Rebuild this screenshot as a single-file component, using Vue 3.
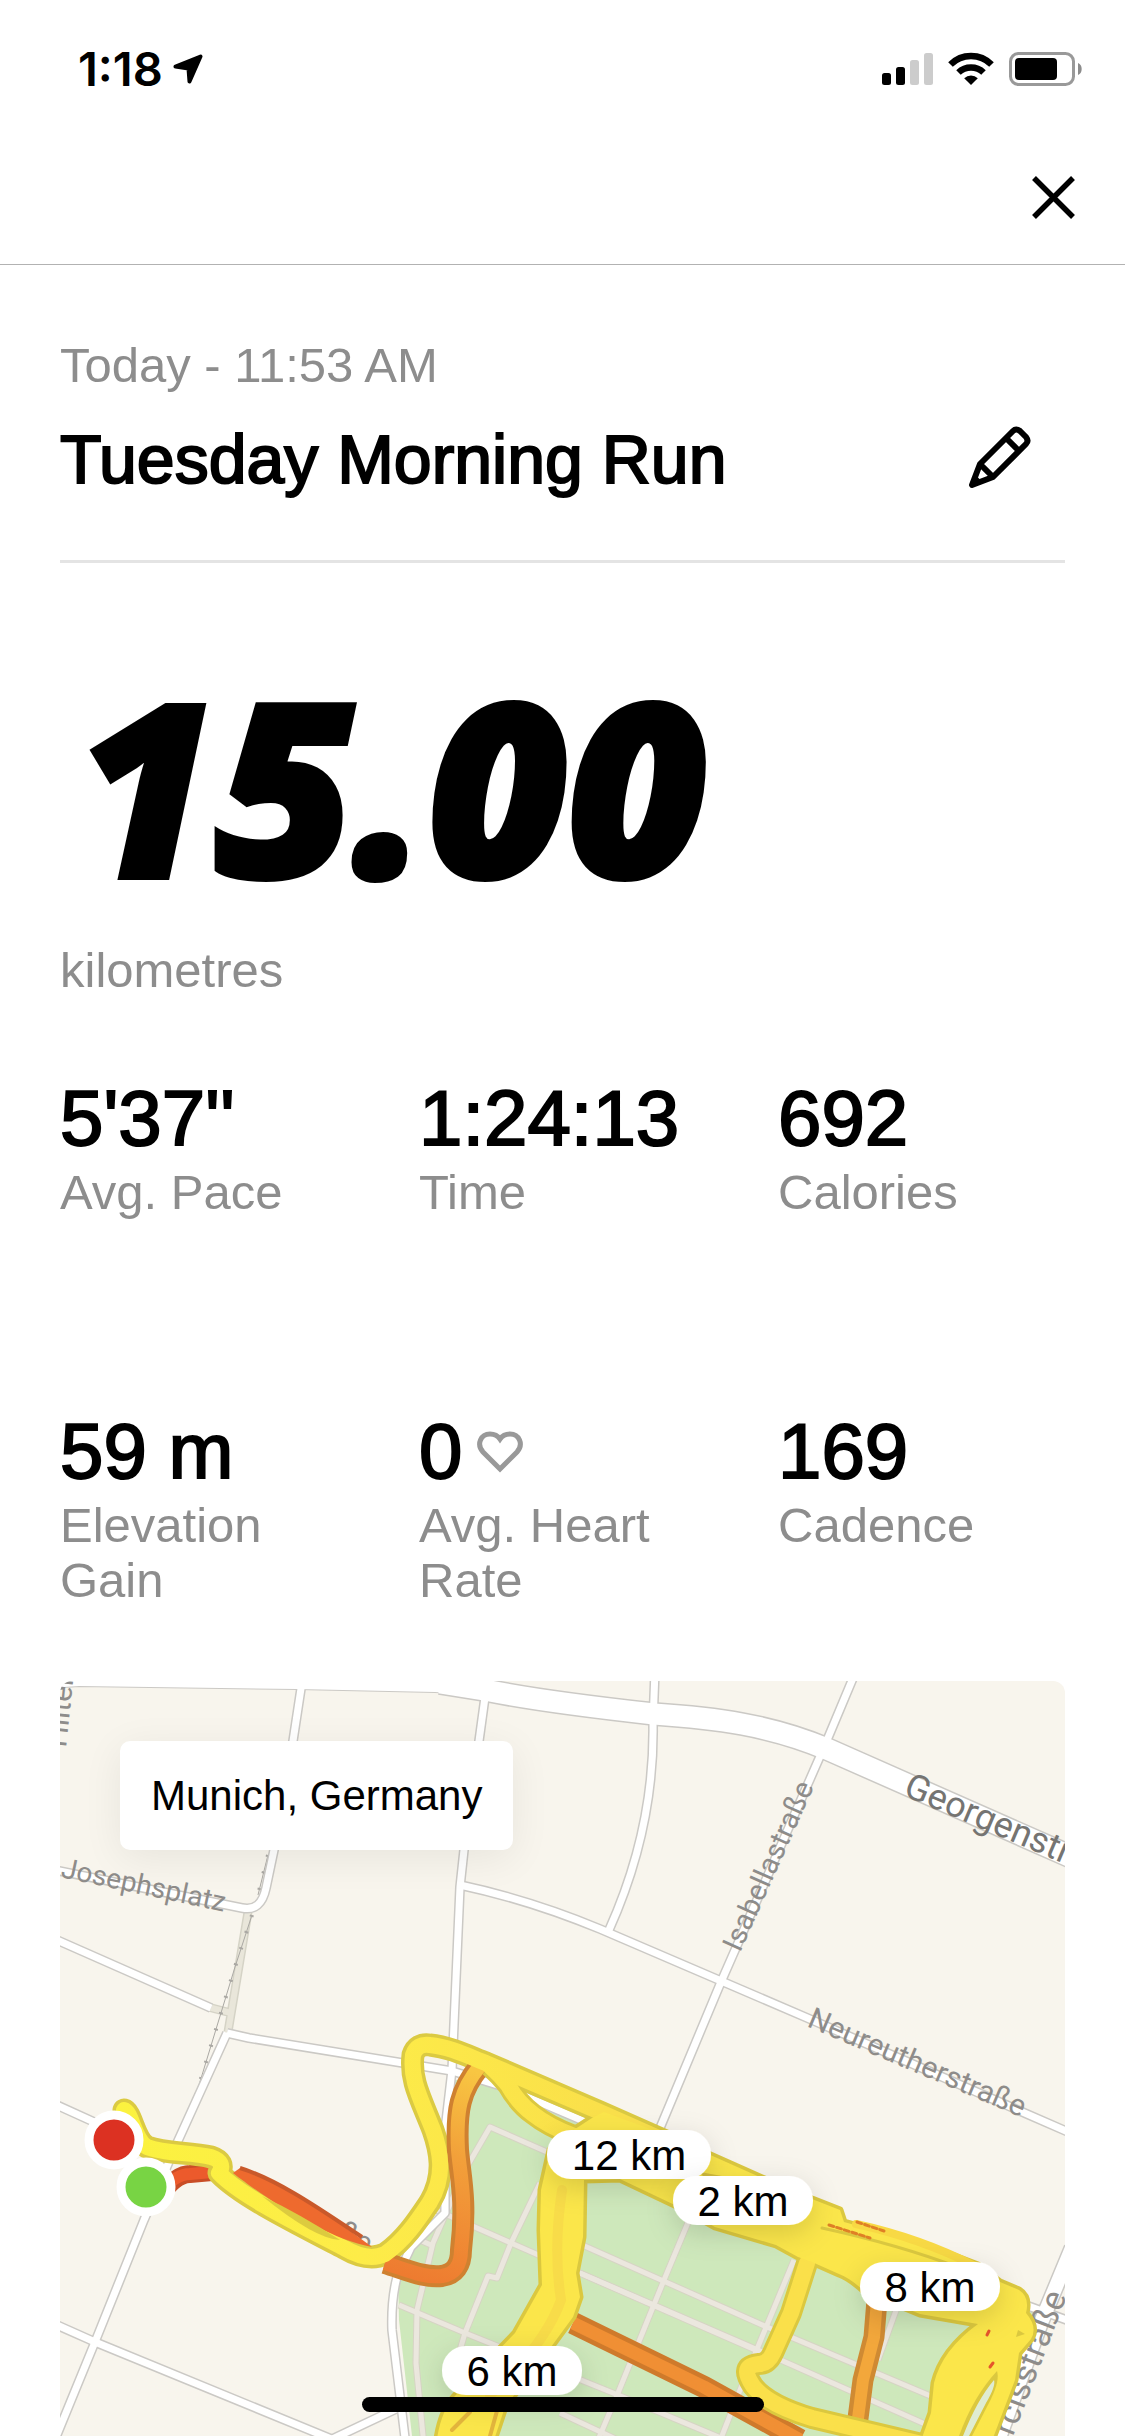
<script setup>
const stats = [
  { value: "5'37''", label: 'Avg. Pace' },
  { value: '1:24:13', label: 'Time' },
  { value: '692', label: 'Calories' },
  { value: '59 m', label: 'Elevation Gain' },
  { value: '0', label: 'Avg. Heart Rate', heart: true },
  { value: '169', label: 'Cadence' },
]

const boulevard = 'M440 1683 L490 1691 C530 1699 600 1708 654 1714 C715 1718 770 1725 827 1749 L1085 1863'
const boulevardWest = 'M50 1688 L79 1686 L297 1689 L435 1692 Q462 1693 484 1700 L500 1694 L480 1670 L50 1670 Z'

const roads = [
  'M302 1682 L293 1741 L274 1850 L266 1888 Q261 1912 242 1908 L50 1869',
  'M486 1690 L479 1741 L464 1850 L460 1887 L452 2070 L445 2130 L445 2213 L411 2247 L397 2277 Q391 2300 392 2330 L406 2446',
  'M460 1885 Q530 1900 600 1929 L812 2020 L1075 2135',
  'M655 1671 L653 1723 C654 1780 645 1850 609 1930',
  'M856 1671 L825 1745 L721 1982 L655 2140',
  'M50 1937 L211 2008',
  'M227 2033 L249 2038 L452 2071 L504 2087 L600 2128',
  'M227 2033 L177 2143 L144 2220 L95 2342 L54 2442',
  'M50 2322 L95 2342 L346 2445',
  'M50 2102 L94 2122',
  'M326 2442 L398 2408',
  'M1020 2303 L1075 2323',
]

const parkPaths = [
  'M547 2152 L490 2127 L465 2170 L433 2243 L417 2310 L416 2363 L424 2446',
  'M415 2238 L431 2245',
  'M436 2210 L511 2243 L767 2355',
  'M540 2183 L511 2243 L497 2278 L488 2276 L465 2333 L460 2350',
  'M399 2305 L465 2333 L618 2395 L740 2446',
  'M580 2244 L767 2327 L940 2400',
  'M580 2273 L758 2350 L925 2424',
  'M692 2213 L664 2280 L618 2393 L598 2440',
  'M794 2260 L740 2390 L718 2446',
  'M898 2305 L878 2360',
  'M560 2413 L620 2441',
]

const yellowRoutes = [
  'M124 2110 C132 2112 134 2140 147 2147 C165 2154 190 2152 211 2157 Q226 2162 219 2173 C240 2195 290 2220 344 2248 Q368 2262 385 2254 C405 2240 418 2220 430 2202 C446 2175 440 2150 433 2130 C420 2097 410 2080 413 2055 Q417 2043 430 2045 C450 2047 468 2056 486 2063 L600 2112 L670 2143',
  'M490 2066 Q500 2075 508 2085 Q518 2103 533 2114 Q548 2126 574 2136',
  'M807 2263 L791 2313 L773 2353 Q768 2364 759 2364 C742 2366 746 2375 753 2386 Q768 2405 812 2418 L930 2446',
]

const mainBand =
  'M604 2112 L661 2133 L762 2178 L812 2199 L840 2210 L844 2222 L884 2233 L928 2246 L978 2265 L1000 2282 L1019 2290 Q1030 2297 1026 2313 Q1038 2327 1031 2339 L1019 2353 L1015 2380 L990 2446 L919 2446 L931 2413 L934 2383 Q942 2350 978 2324 L920 2314 L864 2291 Q850 2278 839 2274 L812 2262 L798 2257 L776 2245 L715 2227 L679 2207 L620 2179 L584 2180 L583 2237 L576 2273 L580 2297 L573 2317 L551 2347 L505 2407 L492 2446 L436 2446 Q440 2412 454 2397 L486 2363 L515 2333 L542 2285 L540 2230 L541 2190 L550 2150 L566 2135 L592 2118 Z'

const kmPins = [
  { label: '12 km', x: 629, y: 2154, w: 164 },
  { label: '2 km', x: 743, y: 2200, w: 140 },
  { label: '8 km', x: 930, y: 2286, w: 140 },
  { label: '6 km', x: 512, y: 2370, w: 140 },
]
</script>

<template>
  <div class="screen">
    <div class="status">
      <div class="clock">
        <span>1:18</span>
        <svg width="30" height="30" viewBox="0 0 30 30" aria-hidden="true">
          <path d="M2.500 12.500 L27.500 2.500 L16.500 27.500 L15.500 14.500 Z" stroke="#000" stroke-width="4" stroke-linejoin="round" />
        </svg>
      </div>
      <svg class="indicators" width="201" height="36" viewBox="882 51 201 36" aria-hidden="true">
        <rect x="882" y="73" width="9" height="12" rx="2.500" />
        <rect x="896" y="67" width="9" height="18" rx="2.500" />
        <rect x="910" y="60" width="9" height="25" rx="2.500" fill="#ccc" />
        <rect x="924" y="53" width="9" height="32" rx="2.500" fill="#ccc" />
        <g fill="none" stroke="#000" stroke-width="6.500">
          <path d="M950.500 64.500 A29 29 0 0 1 991.500 64.500" />
          <path d="M958.500 72.500 A18 18 0 0 1 983.500 72.500" />
        </g>
        <path d="M971 85 L964.200 78.200 A10 10 0 0 1 977.800 78.200 Z" />
        <rect x="1010.500" y="53.500" width="63" height="31" rx="8" fill="none" stroke="#999" stroke-width="3" />
        <rect x="1015" y="58" width="42" height="22" rx="4" />
        <path d="M1078 63 a6 6.500 0 0 1 0 12 z" fill="#8c8c8c" />
      </svg>
    </div>

    <header class="topbar">
      <button type="button" class="icon-button" aria-label="Close">
        <svg width="43" height="43" viewBox="0 0 43 43" fill="none" stroke="#000" stroke-width="5.500">
          <path d="M2 2 L41 41 M41 2 L2 41" />
        </svg>
      </button>
    </header>

    <main>
      <section class="heading">
        <div>
          <p class="muted">Today - 11:53 AM</p>
          <h1>Tuesday Morning Run</h1>
        </div>
        <button type="button" class="icon-button" aria-label="Edit title">
          <svg width="66" height="70" viewBox="0 0 66 70" fill="none" stroke="#000" stroke-width="6" stroke-linejoin="round">
            <path d="M5 61 L13 40 L46 7 Q49 4 53 7 L59 13 Q62 17 59 20 L26 53 Z M13 40 L26 53 M39 14 L52 27" />
            <path d="M5 61 L8 52 L14 58 Z" fill="#000" stroke-width="2" />
          </svg>
        </button>
      </section>

      <section class="distance">
        <div class="big">15.00</div>
        <p class="muted">kilometres</p>
      </section>

      <dl class="stats">
        <div v-for="s in stats" :key="s.label" class="stat">
          <dd>
            {{ s.value }}
            <svg v-if="s.heart" width="46" height="42" viewBox="0 0 46 42" fill="none" stroke="#999" stroke-width="5" aria-hidden="true">
              <path d="M23 36 L6 19 C-1 11 4 1 13 1 C18 1 21 3 23 6 C25 3 28 1 33 1 C42 1 47 11 40 19 Z" transform="translate(0 2)" />
            </svg>
          </dd>
          <dt class="muted">{{ s.label }}</dt>
        </div>
      </dl>

      <section class="map">
        <svg class="map-canvas" viewBox="60 1681 1005 755" role="img" aria-label="Route map">
          <defs>
            <linearGradient id="warm" gradientUnits="userSpaceOnUse" x1="400" y1="2275" x2="470" y2="2070">
              <stop offset="0" stop-color="#ee7b30" />
              <stop offset="0.6" stop-color="#f2a03a" />
              <stop offset="1" stop-color="#f8c642" />
            </linearGradient>
            <linearGradient id="sun" gradientUnits="userSpaceOnUse" x1="120" y1="0" x2="600" y2="0">
              <stop offset="0" stop-color="#fbf23f" />
              <stop offset="0.5" stop-color="#fdec48" />
              <stop offset="1" stop-color="#fae04a" />
            </linearGradient>
            <filter id="pinShadow" x="-30%" y="-60%" width="160%" height="260%">
              <feDropShadow dx="0" dy="8" stdDeviation="14" flood-color="#000" flood-opacity="0.14" />
            </filter>
          </defs>

          <rect x="60" y="1681" width="1005" height="755" fill="#f8f5ed" />
          <path fill="#cee8bb" d="M454 2080 L490 2081 L600 2130 L830 2230 L1045 2310 L1000 2436 L412 2436 L399 2320 L398 2277 L411 2247 L445 2213 L454 2163 Z" />
          <g fill="none" stroke-linejoin="round">
            <path v-for="d in parkPaths" :key="d" :d="d" stroke="#d6d4c4" stroke-width="7" />
            <path v-for="d in parkPaths" :key="'i' + d" :d="d" stroke="#ebe7de" stroke-width="5" />
            <path d="M248 1912 L228 2032 M208 2007 L231 2013" stroke="#d5d3c6" stroke-width="9" />
            <path d="M248 1912 L228 2032 M208 2007 L231 2013" stroke="#e9e6da" stroke-width="6" />
            <path d="M268 1855 L258 1895 M252 1915 L235 1967 L192 2108" stroke="#aaa8a3" stroke-width="1" />
            <path d="M268 1855 L258 1895 M252 1915 L235 1967 L192 2108" stroke="#aaa8a3" stroke-width="4" stroke-dasharray="2 15" />
            <path v-for="d in roads" :key="d" :d="d" stroke="#cbc9c5" stroke-width="10" />
            <path d="M1072 2248 L1040 2325 L996 2446" stroke="#cbc9c5" stroke-width="17" />
            <path :d="boulevardWest" stroke="#cbc9c5" stroke-width="2" />
            <path :d="boulevard" stroke="#cbc9c5" stroke-width="24" />
            <path v-for="d in roads" :key="'w' + d" :d="d" stroke="#fff" stroke-width="7" />
            <path d="M1072 2248 L1040 2325 L996 2446" stroke="#fff" stroke-width="14" />
            <path :d="boulevard" stroke="#fff" stroke-width="21" />
          </g>
          <path :d="boulevardWest" fill="#fff" />

          <g class="street">
            <text transform="translate(66 1748) rotate(-84)" font-size="30">Hilten</text>
            <text transform="translate(60 1877) rotate(12)" font-size="28">Josephsplatz</text>
            <text transform="translate(740 1953) rotate(-66)" font-size="29">Isabellastraße</text>
            <text transform="translate(806 2026) rotate(23)" font-size="30">Neureutherstraße</text>
            <text transform="translate(336 2239) rotate(27)" font-size="30">ße</text>
            <text transform="translate(1067 2296) rotate(-69)" font-size="34" text-anchor="end">Arcisstraße</text>
            <text class="major" transform="translate(902 1795) rotate(23)" font-size="36">Georgenstraße</text>
          </g>

          <g fill="none" stroke-linejoin="round">
            <path d="M160 2196 Q176 2174 190 2174 L212 2172" stroke="#c94d26" stroke-width="18" />
            <path d="M160 2192 Q176 2174 190 2174 L212 2172" stroke="#ec5a2c" stroke-width="12" />
            <path :d="yellowRoutes[0]" stroke="#dbca42" stroke-width="23" stroke-linecap="round" />
            <path d="M385 2263 C410 2271 425 2278 442 2276 Q461 2273 461 2250 C467 2200 460 2175 458 2150 C456 2110 460 2090 480 2066" stroke="#cf8130" stroke-width="22" />
            <path d="M385 2263 C410 2271 425 2278 442 2276 Q461 2273 461 2250 C467 2200 460 2175 458 2150 C456 2110 460 2090 480 2066" stroke="url(#warm)" stroke-width="14" />
            <path d="M573 2323 L704 2387 L800 2440" stroke="#cf7a2b" stroke-width="22" />
            <path d="M573 2323 L704 2387 L800 2440" stroke="#f08f34" stroke-width="13" />
            <path d="M877 2300 L874 2337 L863 2380 L857 2426" stroke="#cf8a33" stroke-width="21" />
            <path d="M877 2300 L874 2337 L863 2380 L857 2426" stroke="#f3a73b" stroke-width="12" />
            <path v-for="d in yellowRoutes.slice(1)" :key="d" :d="d" stroke="#dbc83f" stroke-width="22" />
            <path :d="mainBand" fill="#dbc83f" stroke="#dbc83f" stroke-width="7" />
            <path v-for="d in yellowRoutes" :key="'y' + d" :d="d" stroke="url(#sun)" stroke-width="16" stroke-linecap="round" />
          </g>
          <path :d="mainBand" fill="#fbe64a" />
          <path d="M233 2173 L240 2168 C280 2180 330 2216 372 2247 C330 2240 270 2202 233 2173 Z" fill="#ee6a2e" />
          <path d="M240 2168 C280 2180 330 2216 362 2237" fill="none" stroke="#c9592a" stroke-width="4" />
          <path d="M262 2196 Q300 2214 340 2240 Q315 2239 262 2196 Z" fill="#dccb3f" />
          <path d="M700 2172 L722 2176 L740 2186 L708 2183 Z" fill="#d8c23f" />
          <g fill="none" stroke-linecap="round">
            <path d="M822 2228 Q900 2245 960 2268" stroke="#dbc83f" stroke-width="3" />
            <path d="M856 2224 Q920 2238 975 2266" stroke="#f8d944" stroke-width="8" />
            <path d="M829 2225 L870 2238" stroke="#df8025" stroke-width="3" stroke-dasharray="5 3" />
            <path d="M857 2222 L884 2231" stroke="#df8025" stroke-width="3" stroke-dasharray="5 3" />
            <path d="M562 2190 Q553 2250 561 2300 Q545 2345 490 2395" stroke="#f8dc49" stroke-width="10" />
            <path d="M452 2430 L470 2412 M500 2400 L490 2436" stroke="#e3b53c" stroke-width="4" />
            <path d="M987 2335 l2 -4 M990 2367 l3 -4" stroke="#e5552b" stroke-width="3" />
          </g>
          <path d="M997 2371 Q1000 2380 991 2399 L972 2436 L959 2436 Q973 2397 997 2371 Z" fill="#dbc83f" />
          <path d="M994 2380 Q996 2386 986 2403 L969 2436 L963 2436 Q977 2400 994 2380 Z" fill="#dfecd2" />
          <path d="M1018 2330 l7 4 l-9 3 z" fill="#dbc83f" />

          <g stroke="#fff" stroke-width="9">
            <circle cx="114" cy="2140" r="25" fill="#dc3122" />
            <circle cx="146" cy="2187" r="25" fill="#78d444" />
          </g>

          <g v-for="p in kmPins" :key="p.label">
            <rect :x="p.x - p.w / 2" :y="p.y - 24" :width="p.w" height="49" rx="24" fill="#fff" filter="url(#pinShadow)" />
            <text :x="p.x" :y="p.y + 16" text-anchor="middle" font-size="42">{{ p.label }}</text>
          </g>
        </svg>
        <div class="place">Munich, Germany</div>
      </section>
    </main>
    <div class="home-indicator"></div>
  </div>
</template>

<style>
body {
  background: #fff;
}
</style>

<style scoped>
.screen {
  position: relative;
  height: 100vh;
  overflow: hidden;
  color: #000;
  font-family: "Liberation Sans", Arial, sans-serif;
}
p,
h1,
dl,
dd,
dt {
  margin: 0;
}
.status {
  display: flex;
  justify-content: space-between;
  padding: 40px 42px 0 78px;
  height: 60px;
}
.clock {
  display: flex;
  align-items: center;
  gap: 10px;
  height: 58px;
  font: 600 47px/58px Inter, sans-serif;
}
.indicators {
  margin-top: 11px;
}
.topbar {
  display: flex;
  justify-content: flex-end;
  align-items: center;
  height: 165px;
  padding: 30px 50px 0 60px;
  border-bottom: 1px solid #b2b2b2;
  box-sizing: border-box;
}
.icon-button {
  display: flex;
  padding: 0;
  border: 0;
  background: none;
}
main {
  padding: 0 60px;
}
.muted {
  color: #8d8d8d;
  font-size: 49px;
  line-height: 55px;
}
.heading {
  display: flex;
  justify-content: space-between;
  align-items: flex-end;
  padding: 73px 32px 66px 0;
  border-bottom: 3px solid #e4e4e4;
}
h1 {
  margin-top: 31px;
  font-size: 68px;
  font-weight: 400;
  line-height: 70px;
  -webkit-text-stroke: 2px #000;
}
.distance {
  padding-top: 76px;
}
.big {
  margin-bottom: 14px;
  padding-left: 16px;
  font: italic 800 240px/290px "Open Sans", sans-serif;
  -webkit-text-stroke: 6px #000;
}
.stats {
  display: grid;
  grid-template-columns: repeat(3, 1fr);
  column-gap: 72px;
  padding: 74px 0 73px;
}
.stat {
  min-height: 333px;
}
.stat:nth-child(n + 4) {
  min-height: 0;
}
.stat dd {
  display: flex;
  align-items: center;
  gap: 15px;
  font-size: 78px;
  font-kerning: none;
  line-height: 93px;
  white-space: nowrap;
  -webkit-text-stroke: 2px #000;
}
.map {
  position: relative;
  overflow: hidden;
  border-radius: 12px 12px 0 0;
}
.map-canvas {
  display: block;
  width: 100%;
}
.street {
  fill: #8e8c8a;
  font-family: Roboto, sans-serif;
}
.major {
  fill: #757472;
}
.place {
  position: absolute;
  top: 60px;
  left: 60px;
  padding: 30px 31px;
  border-radius: 10px;
  background: #fff;
  box-shadow: 0 8px 40px rgba(0, 0, 0, 0.07);
  font-size: 42px;
  line-height: 49px;
}
.home-indicator {
  position: absolute;
  bottom: 24px;
  left: 50%;
  width: 402px;
  height: 15px;
  margin-left: -201px;
  border-radius: 8px;
  background: #000;
}
</style>
